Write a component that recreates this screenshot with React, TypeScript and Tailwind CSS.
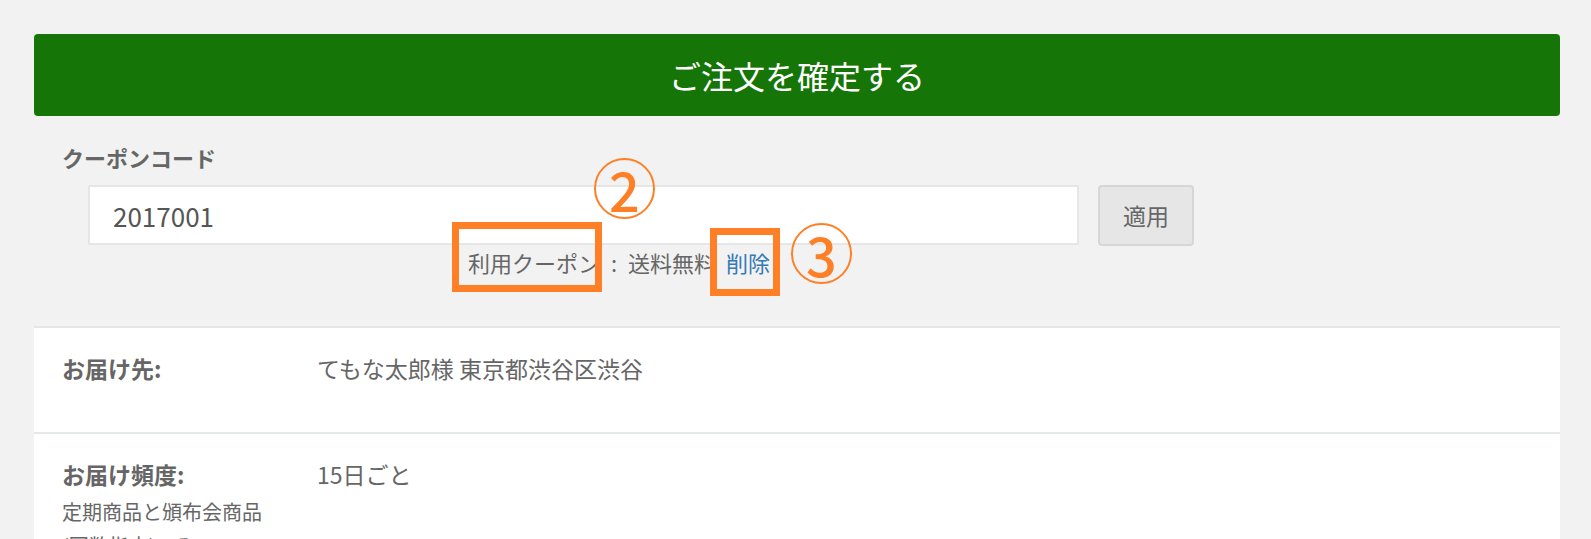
const ORANGE = "#ff7f27";

function CircledNumber({ n, className }: { n: string; className: string }) {
  return (
    <div
      className={`absolute flex h-[61px] w-[61px] items-center justify-center rounded-full border-2 border-[#ff7f27] ${className}`}
    >
      <span className="text-[54px] font-medium leading-none text-[#ff7f27]">
        {n}
      </span>
    </div>
  );
}

export default function App() {
  return (
    <main
      className="relative min-h-screen bg-[#f2f2f2] pl-[34px] pr-[31px] pt-[34px] text-[#666]"
      style={{ fontFamily: '"Noto Sans CJK JP", "Noto Sans", sans-serif' }}
    >
      <button className="flex h-[82px] w-full items-center justify-center rounded-[4px] bg-[#167507] text-[32px] leading-none text-white">
        ご注文を確定する
      </button>

      <section className="pt-[25px]">
        <p className="pl-[28px] text-[22px] font-bold leading-[33px]">
          クーポンコード
        </p>
        <div className="mt-[11px] flex items-start pl-[54px]">
          <div className="flex h-[60px] w-[991px] items-center border-2 border-[#e6e6e6] bg-white pl-[23px] text-[26px] text-[#555]">
            2017001
          </div>
          <button className="ml-[19px] h-[61px] w-[96px] rounded-[4px] border-2 border-[#d6d6d6] bg-[#e6e6e6] text-[23px] text-[#666]">
            適用
          </button>
        </div>
        <p className="pl-[434px] text-[22px] leading-[33px]">
          利用クーポン
          <span className="inline-block w-[28px] text-center">:</span>
          送料無料
          <span className="inline-block w-[10px]" />
          <span className="text-[#337ab7]">削除</span>
        </p>
      </section>

      <section className="mt-[47px] border-t-2 border-[#e6e6e6] bg-white">
        <div className="flex h-[106px] border-b-2 border-[#e5e8e8] pl-[28px] pt-[24px] text-[23px] leading-[33px]">
          <div className="w-[255px] font-bold">お届け先:</div>
          <div>てもな太郎様 東京都渋谷区渋谷</div>
        </div>
        <div className="flex h-[120px] pl-[28px] pt-[24px] text-[23px] leading-[33px]">
          <div className="w-[255px]">
            <div className="font-bold">お届け頻度:</div>
            <div className="mt-1 text-[20px] leading-[34px]">
              定期商品と頒布会商品
              <br />
              (回数指定)のみ
            </div>
          </div>
          <div>15日ごと</div>
        </div>
      </section>

      {/* annotation overlays */}
      <div
        className="absolute left-[452px] top-[222px] h-[70px] w-[150px] border-[7px]"
        style={{ borderColor: ORANGE }}
      />
      <div
        className="absolute left-[710px] top-[228px] h-[68px] w-[70px] border-[7px]"
        style={{ borderColor: ORANGE }}
      />
      <CircledNumber n="2" className="left-[594px] top-[158px]" />
      <CircledNumber n="3" className="left-[791px] top-[223px]" />
    </main>
  );
}
